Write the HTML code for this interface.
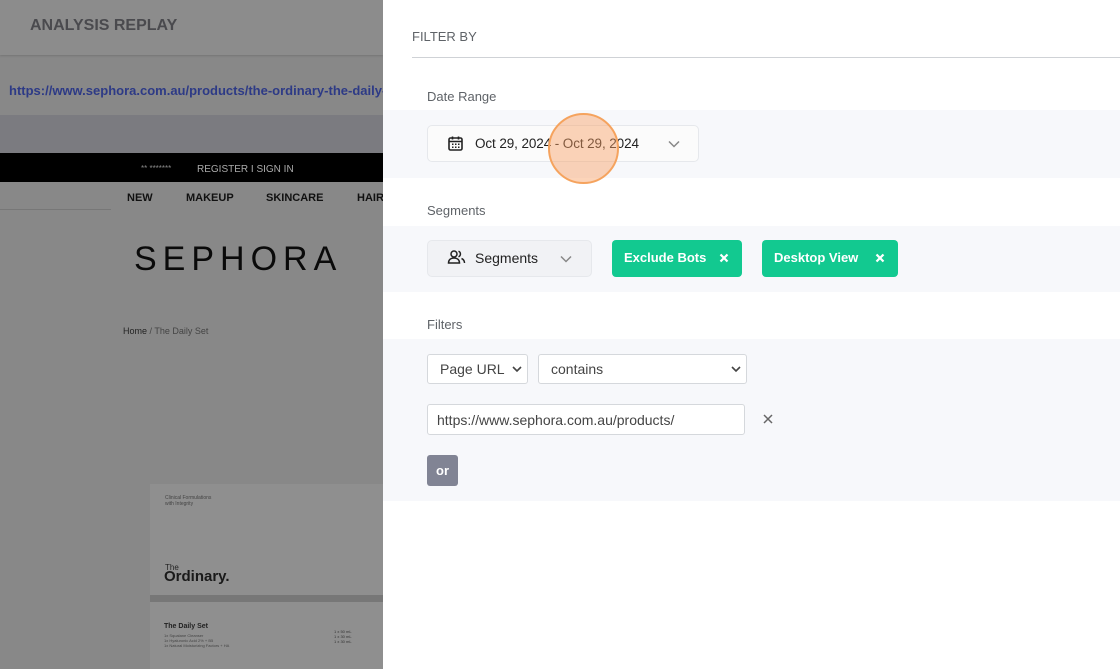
<!DOCTYPE html>
<html><head><style>
*{margin:0;padding:0;box-sizing:border-box}
body{width:1120px;height:669px;overflow:hidden;position:relative;font-family:"Liberation Sans",sans-serif;background:#888}
.a{position:absolute}
.lbl{font-size:13px;color:#5f6368}
.sec{background:#f7f8fb;left:383px;width:737px}
</style></head><body>
<div class="a" style="left:0;top:0;width:383px;height:55px;background:#8c8c8c;box-shadow:0 1px 2px rgba(0,0,0,.15)"></div>
<div class="a" style="left:30px;top:17px;font-size:16px;font-weight:bold;color:#4a4a4e">ANALYSIS REPLAY</div>
<div class="a" style="left:9px;top:83px;font-size:13px;font-weight:bold;color:#2d3a86;white-space:nowrap;width:374px;overflow:hidden">https://www.sephora.com.au/products/the-ordinary-the-daily-set</div>
<div class="a" style="left:0;top:115px;width:383px;height:38px;background:#7b7b80"></div>
<div class="a" style="left:0;top:153px;width:383px;height:29px;background:#000"></div>
<div class="a" style="left:141px;top:164px;font-size:8px;color:#888">** *******</div>
<div class="a" style="left:197px;top:164px;font-size:10px;color:#aaa">REGISTER I SIGN IN</div>
<div class="a" style="left:0;top:209px;width:111px;height:1px;background:#777"></div>
<div class="a" style="left:127px;top:192px;font-size:11px;font-weight:bold;color:#111">NEW</div>
<div class="a" style="left:186px;top:192px;font-size:11px;font-weight:bold;color:#111">MAKEUP</div>
<div class="a" style="left:266px;top:192px;font-size:11px;font-weight:bold;color:#111">SKINCARE</div>
<div class="a" style="left:357px;top:192px;font-size:11px;font-weight:bold;color:#111">HAIR</div>
<div class="a" style="left:134px;top:240px;font-size:34px;letter-spacing:6px;color:#0a0a0a">SEPHORA</div>
<div class="a" style="left:123px;top:326px;font-size:9px;color:#222">Home <span style="color:#444">/ The Daily Set</span></div>
<div class="a" style="left:150px;top:484px;width:233px;height:185px;background:#8f8f8f"></div>
<div class="a" style="left:165px;top:495px;font-size:5px;color:#444;line-height:6px">Clinical Formulations<br>with Integrity</div>
<div class="a" style="left:165px;top:563px;font-size:8px;color:#222">The</div>
<div class="a" style="left:164px;top:568px;font-size:15px;font-weight:bold;color:#1a1a1a">Ordinary.</div>
<div class="a" style="left:150px;top:595px;width:233px;height:7px;background:#777"></div>
<div class="a" style="left:164px;top:623px;font-size:7px;font-weight:bold;color:#222">The Daily Set</div>
<div class="a" style="left:164px;top:633px;font-size:4px;color:#444;line-height:5px">1x Squalane Cleanser<br>1x Hyaluronic Acid 2% + B5<br>1x Natural Moisturizing Factors + HA</div>
<div class="a" style="left:334px;top:629px;font-size:4px;color:#333;line-height:5px">1 x 50 mL<br>1 x 30 mL<br>1 x 30 mL</div>
<div class="a" style="left:383px;top:0;width:737px;height:669px;background:#fff"></div>
<div class="a" style="left:412px;top:29px;font-size:13px;color:#5f6368">FILTER BY</div>
<div class="a" style="left:412px;top:57px;width:708px;height:1px;background:#cfd2d6"></div>
<div class="a lbl" style="left:427px;top:89px">Date Range</div>
<div class="a sec" style="top:110px;height:68px"></div>
<div class="a" style="left:427px;top:125px;width:272px;height:37px;border:1px solid #e6e8ec;border-radius:5px;background:#fbfbfb"></div>
<svg class="a" style="left:447px;top:135px" width="17" height="17" viewBox="0 0 17 17"><rect x="2" y="3" width="13" height="12" rx="1.5" fill="none" stroke="#222" stroke-width="1.6"/><path d="M2 6.5h13M5.5 1.5v3M11.5 1.5v3" stroke="#222" stroke-width="1.6"/><g fill="#222"><rect x="5" y="8.5" width="1.5" height="1.5"/><rect x="8" y="8.5" width="1.5" height="1.5"/><rect x="11" y="8.5" width="1.5" height="1.5"/><rect x="5" y="11.5" width="1.5" height="1.5"/><rect x="8" y="11.5" width="1.5" height="1.5"/><rect x="11" y="11.5" width="1.5" height="1.5"/></g></svg>
<div class="a" style="left:475px;top:136px;font-size:13.5px;letter-spacing:-0.1px;color:#222">Oct 29, 2024 - Oct 29, 2024</div>
<svg class="a" style="left:668px;top:140px" width="12" height="8" viewBox="0 0 12 8"><path d="M1 1.5l5 5 5-5" fill="none" stroke="#888" stroke-width="1.5"/></svg>
<div class="a lbl" style="left:427px;top:203px">Segments</div>
<div class="a sec" style="top:226px;height:66px"></div>
<div class="a" style="left:427px;top:240px;width:165px;height:37px;border:1px solid #e6e8ec;border-radius:5px;background:#f1f2f5"></div>
<svg class="a" style="left:447px;top:249px" width="19" height="16" viewBox="0 0 19 16"><circle cx="7" cy="5" r="3" fill="none" stroke="#222" stroke-width="1.5"/><path d="M1.5 14c0-3.5 2.5-5 5.5-5s5.5 1.5 5.5 5z" fill="none" stroke="#222" stroke-width="1.5"/><path d="M11.5 2.2a3 3 0 010 5.6M14.5 9.5c1.8.7 3 2.2 3 4.5" fill="none" stroke="#222" stroke-width="1.5"/></svg>
<div class="a" style="left:475px;top:250px;font-size:14px;color:#222">Segments</div>
<svg class="a" style="left:560px;top:255px" width="12" height="8" viewBox="0 0 12 8"><path d="M1 1.5l5 5 5-5" fill="none" stroke="#888" stroke-width="1.5"/></svg>
<div class="a" style="left:612px;top:240px;width:130px;height:37px;background:#12c990;border-radius:4px"></div>
<div class="a" style="left:624px;top:250px;font-size:13px;font-weight:bold;color:#fff">Exclude Bots</div>
<svg class="a" style="left:719px;top:253px" width="10" height="10" viewBox="0 0 10 10"><path d="M1.5 1.5l7 7M8.5 1.5l-7 7" stroke="#fff" stroke-width="2.2"/></svg>
<div class="a" style="left:762px;top:240px;width:136px;height:37px;background:#12c990;border-radius:4px"></div>
<div class="a" style="left:774px;top:250px;font-size:13px;font-weight:bold;color:#fff">Desktop View</div>
<svg class="a" style="left:875px;top:253px" width="10" height="10" viewBox="0 0 10 10"><path d="M1.5 1.5l7 7M8.5 1.5l-7 7" stroke="#fff" stroke-width="2.2"/></svg>
<div class="a lbl" style="left:427px;top:317px">Filters</div>
<div class="a sec" style="top:339px;height:162px"></div>
<div class="a" style="left:427px;top:354px;width:101px;height:30px;border:1px solid #d5d8dc;border-radius:3px;background:#fff"></div>
<div class="a" style="left:440px;top:361px;font-size:14px;color:#444">Page URL</div>
<svg class="a" style="left:512px;top:366px" width="10" height="7" viewBox="0 0 10 7"><path d="M1 1l4 4 4-4" fill="none" stroke="#444" stroke-width="1.6"/></svg>
<div class="a" style="left:538px;top:354px;width:209px;height:30px;border:1px solid #d5d8dc;border-radius:3px;background:#fff"></div>
<div class="a" style="left:551px;top:361px;font-size:14px;color:#444">contains</div>
<svg class="a" style="left:731px;top:366px" width="10" height="7" viewBox="0 0 10 7"><path d="M1 1l4 4 4-4" fill="none" stroke="#444" stroke-width="1.6"/></svg>
<div class="a" style="left:427px;top:404px;width:318px;height:31px;border:1px solid #d5d8dc;border-radius:3px;background:#fff"></div>
<div class="a" style="left:437px;top:412px;font-size:14px;color:#444">https://www.sephora.com.au/products/</div>
<svg class="a" style="left:763px;top:414px" width="10" height="10" viewBox="0 0 10 10"><path d="M1 1l8 8M9 1l-8 8" stroke="#666" stroke-width="1.5"/></svg>
<div class="a" style="left:427px;top:455px;width:31px;height:31px;background:#818494;border-radius:3px;color:#fff;font-size:13px;font-weight:bold;text-align:center;line-height:31px">or</div>
<div class="a" style="left:548px;top:113px;width:71px;height:71px;border-radius:50%;background:rgba(248,160,100,.45);border:2px solid #f5a35e"></div>
</body></html>
